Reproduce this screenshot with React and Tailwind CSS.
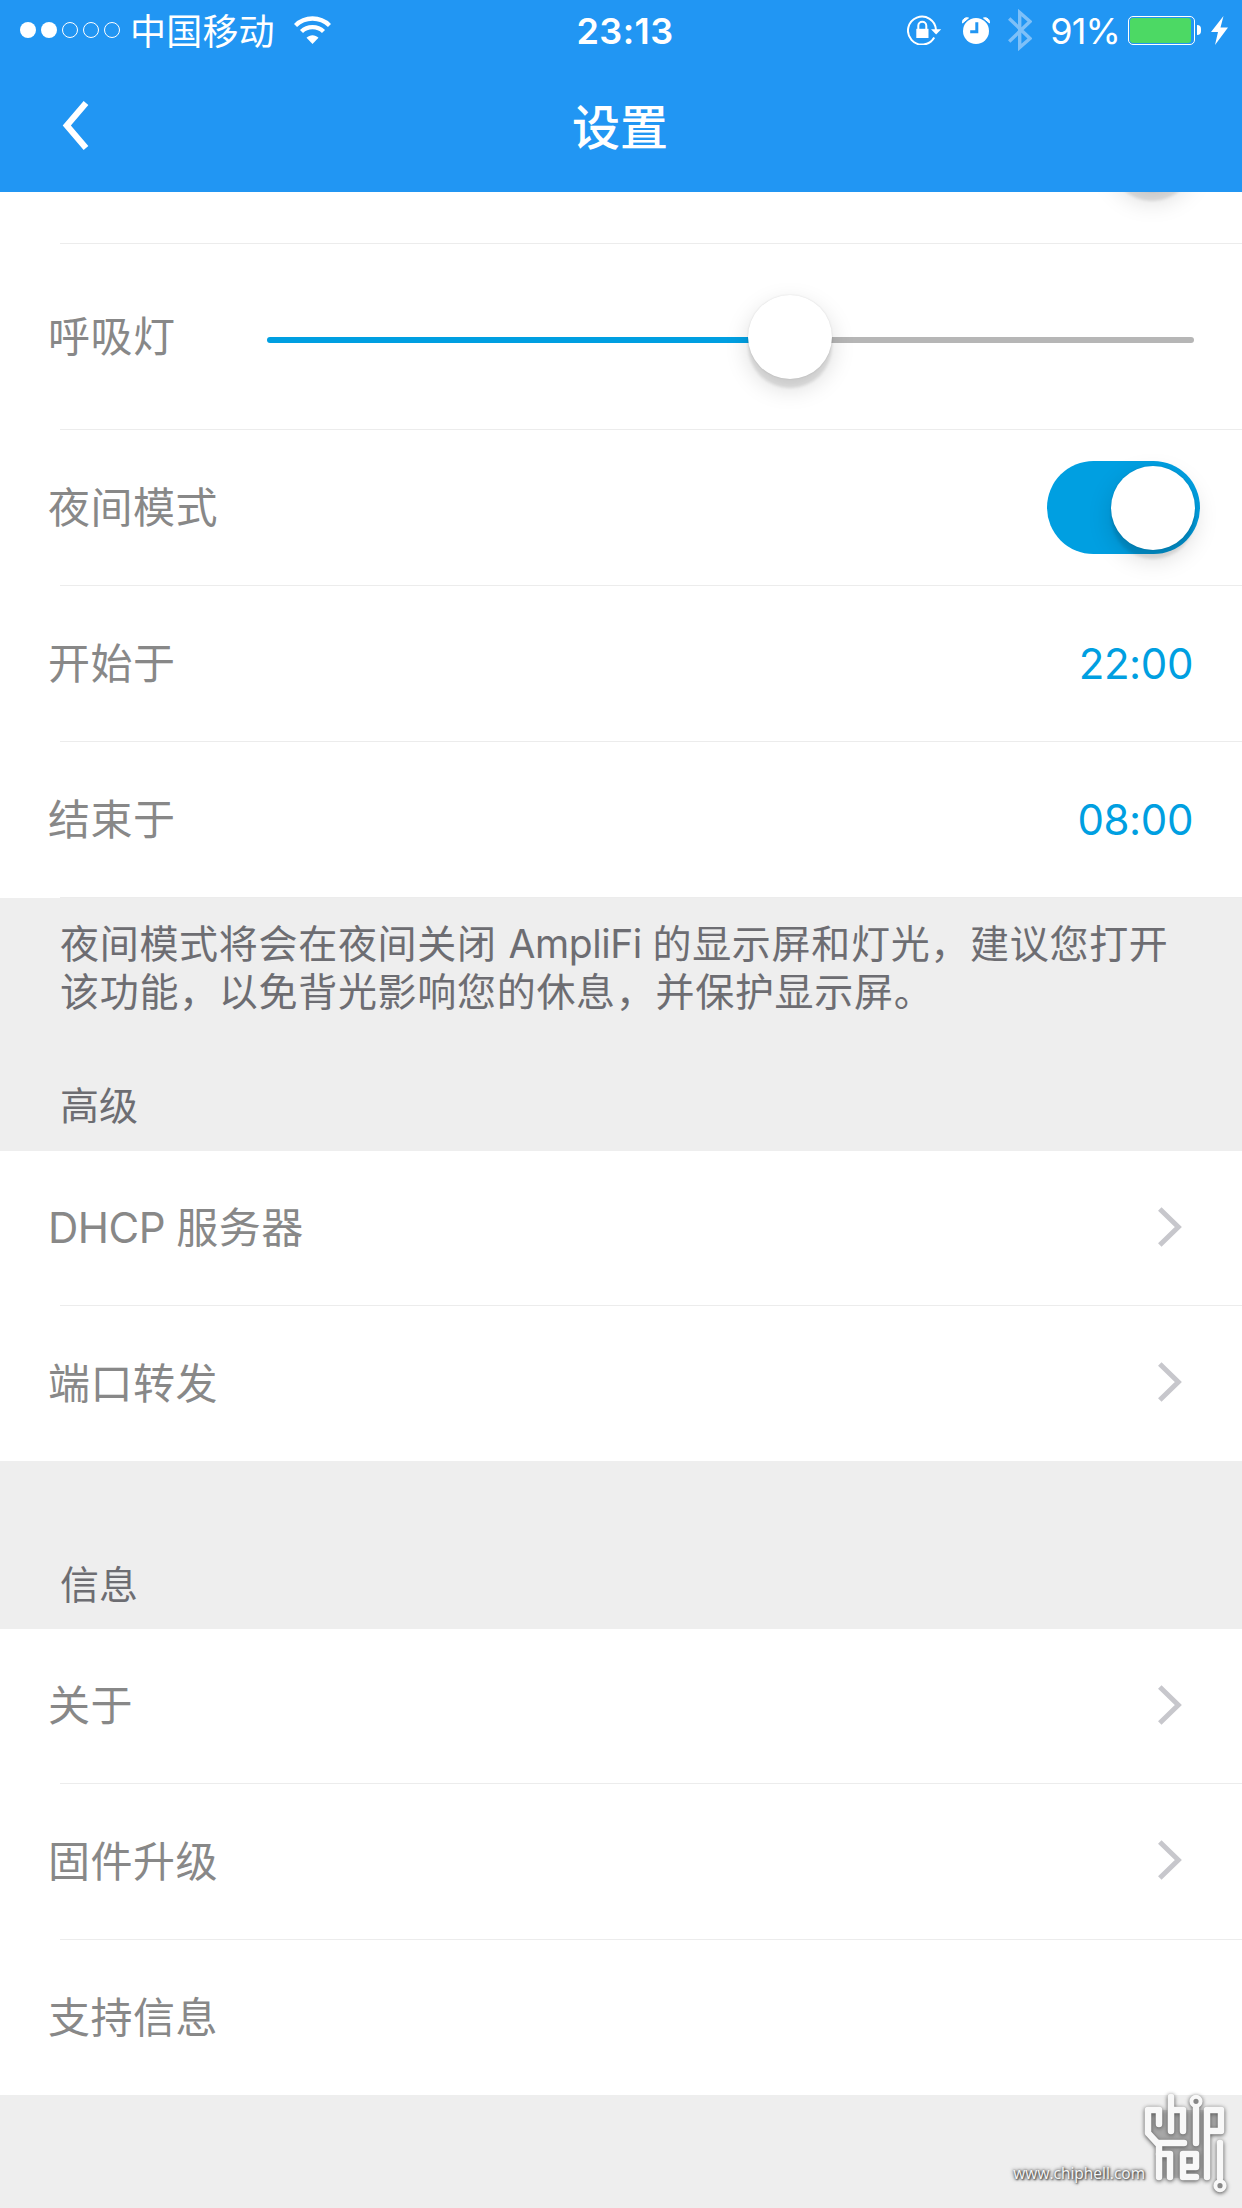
const StatusBar = () => (
  <div className="flex h-[60px] items-center justify-between text-[36px] leading-[60px] text-white">
    <div className="flex w-[414px] items-center pl-5">
      <div className="flex gap-[5px]">
        <span className="size-4 rounded-full bg-white" />
        <span className="size-4 rounded-full bg-white" />
        <span className="size-4 rounded-full border border-white" />
        <span className="size-4 rounded-full border border-white" />
        <span className="size-4 rounded-full border border-white" />
      </div>
      <span className="ml-[10px] pt-[3px] tracking-[0.2px]">中国移动</span>
      <svg className="ml-[19px]" width="37" height="28" viewBox="0 0 37 28">
        <g fill="none" stroke="#fff" strokeWidth="4.4">
          <path d="M1.5 9.5C11 .2 26 .2 35.500 9.500" />
          <path d="M7.500 15.500C13.500 9.700 23.500 9.700 29.500 15.500" />
        </g>
        <path d="M18.500 28l-6-6.300c3.400-3.400 8.600-3.400 12 0z" fill="#fff" />
      </svg>
    </div>
    <span className="pt-[2px] pl-2 font-semibold tracking-[0.4px]">23:13</span>
    <div className="flex w-[414px] items-center justify-end pr-[14px]">
      <svg className="mr-[20px]" width="35" height="30" viewBox="0 0 35 30">
        <path d="M27.200 22.500A14 14 0 1 1 29 15" fill="none" stroke="#fff" strokeWidth="2" />
        <path d="M24 14.200h10.200l-5.100 5.200z" fill="#fff" />
        <path d="M11.300 14v-3.200a4 4 0 0 1 8 0V14" fill="none" stroke="#fff" strokeWidth="2" />
        <path d="M9.300 13.800h12.200V23H9.300z" fill="#fff" />
      </svg>
      <svg className="mr-[18px]" width="28" height="27" viewBox="0 0 28 27">
        <circle cx="14" cy="14" r="13" fill="#fff" />
        <path d="M.5 6C0 2.500 3 0 6.500 1zM27.500 6C28 2.500 25 0 21.500 1z" fill="#fff" stroke="#fff" />
        <path d="M14.800 5.200v9.500H8.200" fill="none" stroke="#2196f3" strokeWidth="3" />
      </svg>
      <svg className="mr-[18px]" width="24" height="42" viewBox="0 0 24 42">
        <path d="M1.200 9.500L22 29.500 11.700 38.500V3.500L22 12.500 1.200 32.500" fill="none" stroke="#7ec0f8" strokeWidth="3.400" />
      </svg>
      <span className="mr-[8px] pt-[2px] tracking-[-0.9px]">91%</span>
      <div className="h-[29px] w-[67px] rounded-[5px] border border-white p-px">
        <div className="h-full w-[61px] rounded-[3px] bg-[#4cd964]" />
      </div>
      <span className="ml-[2px] h-[10px] w-[4px] rounded-r-full bg-white" />
      <svg className="ml-[10px]" width="17" height="29" viewBox="0 0 17 29">
        <path d="M12.500 0L0 16h7L4 29 17 11.500H9.500z" fill="#fff" />
      </svg>
    </div>
  </div>
);

const Header = () => (
  <header className="relative z-10 h-[192px] bg-[#2196f3]">
    <StatusBar />
    <div className="grid h-[132px] grid-cols-3 items-center text-white">
      <svg className="ml-[62px]" width="28" height="52" viewBox="0 0 28 52">
        <path d="M24 3L4.800 25.500 24 48" fill="none" stroke="#fff" strokeWidth="6.200" />
      </svg>
      <h1 className="pt-[3px] pr-[2px] text-center text-[48px] leading-none font-medium">设置</h1>
    </div>
  </header>
);

const Chevron = () => (
  <svg className="mr-[12px] mb-[3px]" width="26" height="40" viewBox="0 0 26 40">
    <path d="M3.800 2L22.300 20 3.800 38" fill="none" stroke="#c7c7cc" strokeWidth="5" />
  </svg>
);

const Knob = () => (
  <span className="block size-[84px] rounded-full bg-white shadow-[0_9px_3px_rgba(0,0,0,0.1),0_9px_24px_rgba(0,0,0,0.15),0_0_2px_rgba(0,0,0,0.12)]" />
);

const Toggle = () => (
  <div className="mr-[-6px] flex h-[93px] w-[153px] items-center justify-end rounded-full bg-[#009fe1] pr-[5px]">
    <Knob />
  </div>
);

const Row = ({ label, first, children }) => (
  <div
    className={`flex items-center justify-between pr-[48px] pl-[48px] ${
      first ? "h-[154px]" : "h-[155px]"
    }`}
  >
    <span className="text-[42px] leading-none tracking-[0.5px] text-[#888]">{label}</span>
    {children}
  </div>
);

const Divider = () => <hr className="ml-[60px] border-0 border-t border-[#ececec]" />;

const Time = ({ value }) => (
  <span className="mr-px text-[42px] leading-none tracking-[-0.4px] text-[#009fe1]">{value}</span>
);

const SectionTitle = ({ children }) => (
  <h2 className="pl-[60px] text-[39px] leading-[48px] text-[#6d6d72]">{children}</h2>
);

const Watermark = () => (
  <div className="absolute right-[11px] bottom-[10px] flex items-end text-[#f8f8f8]">
    <span className="mb-[13px] text-[15.500px] leading-[24px] font-['Open_Sans','Noto_Sans_CJK_SC',sans-serif] [text-shadow:0_0_3px_#444,1px_1px_2px_#444,0_0_4px_#777]">
      www.chiphell.com
    </span>
    <svg
      className="ml-[-6px] drop-shadow-[0_1px_2px_#444]"
      width="92"
      height="106"
      viewBox="0 0 92 106"
    >
      <path d="M9 18h73v21H68v47H20V53L9 41z" fill="#777" opacity="0.3" />
      <g fill="none" stroke="#f8f8f8" strokeWidth="6.500" strokeLinejoin="round" strokeLinecap="round">
        <path d="M20 32V18H9v23l11 12v32M20 51h25" />
        <path d="M20 62h11v23" />
        <path d="M32 5v34M32 18h12v21" />
        <path d="M57 15v36" />
        <path d="M68 85V18h14v21H68" />
        <path d="M57 75V62H44v23h13M44 75h13" />
        <path d="M81 51v35" />
      </g>
      <g fill="#888" stroke="#f8f8f8" strokeWidth="4">
        <circle cx="57" cy="9.300" r="4.600" />
        <circle cx="81" cy="93.700" r="4.600" />
      </g>
    </svg>
  </div>
);

export default function App() {
  return (
    <div className="relative h-[2208px] w-[1242px] overflow-hidden bg-[#eee] font-['Inter','Noto_Sans_CJK_SC',sans-serif]">
      <Header />

      <section className="bg-white">
        {/* row scrolled under the header, only the knob's shadow is left */}
        <div className="flex h-[51px] items-start justify-end pr-[48px]">
          <div className="mt-[-84px]">
            <Knob />
          </div>
        </div>
        <Divider />
        <div className="flex h-[185px] items-center pr-[48px] pl-[48px]">
          <span className="w-[219px] text-[42px] leading-none tracking-[0.5px] text-[#888]">呼吸灯</span>
          <div className="flex flex-1 items-center">
            <div className="mt-[7px] h-[6px] w-[482px] rounded-l-full bg-[#009fe1]" />
            <div className="relative -mr-[1px] -ml-[1px]">
              <Knob />
            </div>
            <div className="mt-[7px] h-[6px] flex-1 rounded-r-full bg-[#b6b6b6]" />
          </div>
        </div>
        <Divider />
        <Row label="夜间模式">
          <Toggle />
        </Row>
        <Divider />
        <Row label="开始于">
          <Time value="22:00" />
        </Row>
        <Divider />
        <Row label="结束于">
          <Time value="08:00" />
        </Row>
        <Divider />
      </section>

      <div className="h-[253px] pt-[22px]">
        <p className="pr-[48px] pl-[60px] text-[39px] leading-[48px] tracking-[0.7px] text-[#6d6d72]">
          夜间模式将会在夜间关闭 <span className="tracking-[-0.4px]">AmpliFi </span>
          的显示屏和灯光，建议您打开
          <br />
          该功能，以免背光影响您的休息，并保护显示屏。
        </p>
        <div className="mt-[66px]">
          <SectionTitle>高级</SectionTitle>
        </div>
      </div>

      <section className="bg-white">
        <Row
          first
          label={
            <>
              <span className="tracking-[-0.5px]">DHCP </span>服务器
            </>
          }
        >
          <Chevron />
        </Row>
        <Divider />
        <Row label="端口转发">
          <Chevron />
        </Row>
      </section>

      <div className="flex h-[168px] flex-col justify-end pb-[20px]">
        <SectionTitle>信息</SectionTitle>
      </div>

      <section className="bg-white">
        <Row first label="关于">
          <Chevron />
        </Row>
        <Divider />
        <Row label="固件升级">
          <Chevron />
        </Row>
        <Divider />
        <Row label="支持信息" />
      </section>

      <Watermark />
    </div>
  );
}
